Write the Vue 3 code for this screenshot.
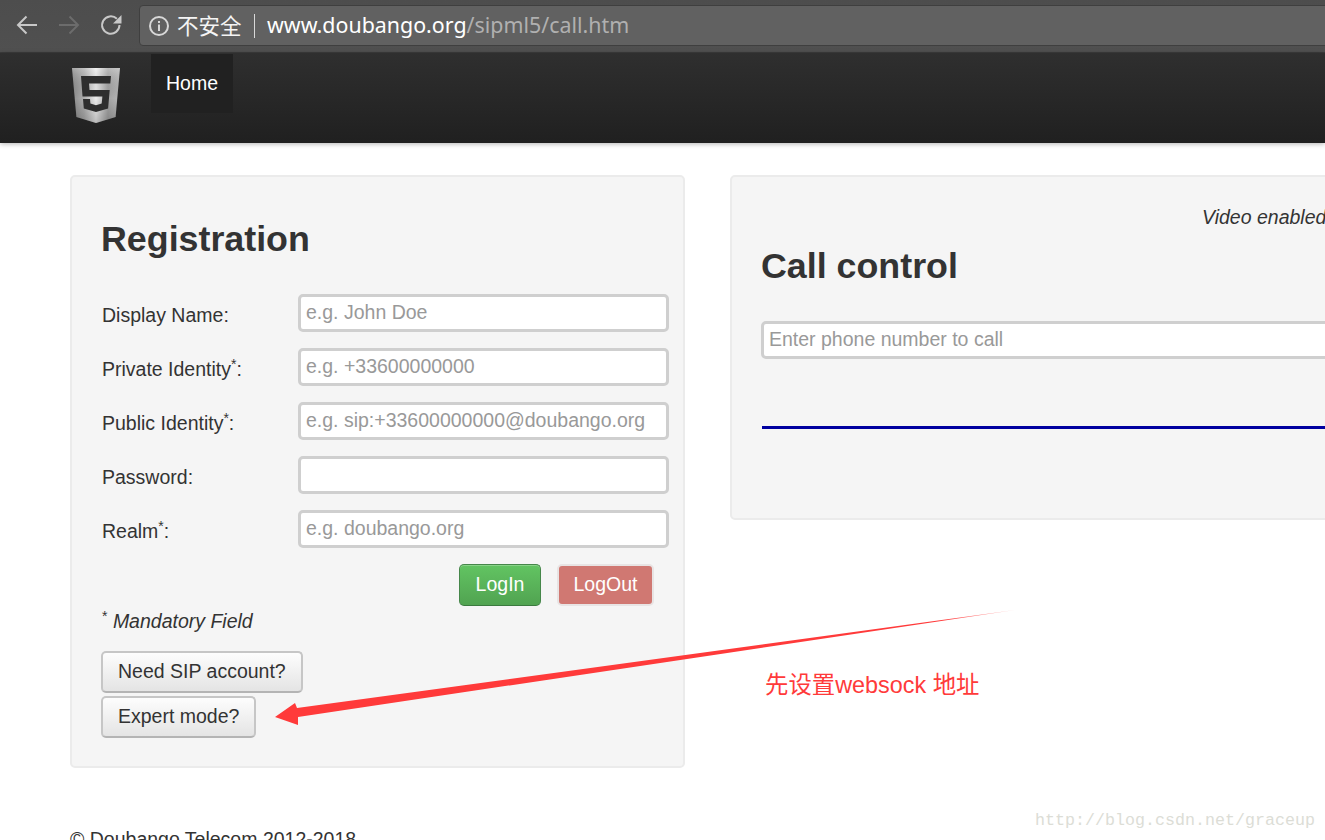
<script setup>
const fields = [
  { label: 'Display Name', star: false, placeholder: 'e.g. John Doe' },
  { label: 'Private Identity', star: true, placeholder: 'e.g. +33600000000' },
  { label: 'Public Identity', star: true, placeholder: 'e.g. sip:+33600000000@doubango.org' },
  { label: 'Password', star: false, placeholder: '' },
  { label: 'Realm', star: true, placeholder: 'e.g. doubango.org' },
]
</script>

<template>
  <div class="screen">
    <header class="toolbar">
      <svg class="nav-icon" width="24" height="24" viewBox="0 0 24 24" fill="none" stroke="#c8c8c8" stroke-width="2">
        <path d="M22 12H3M11.5 3.5 3 12l8.5 8.5" />
      </svg>
      <svg class="nav-icon" width="24" height="24" viewBox="0 0 24 24" fill="none" stroke="#6c6c6c" stroke-width="2">
        <path d="M2 12h19M12.5 3.5 21 12l-8.5 8.5" />
      </svg>
      <svg class="nav-icon" width="24" height="24" viewBox="0 0 24 24" fill="none">
        <path d="M20.5 12a8.7 8.7 0 1 1-2.6-6.2" stroke="#c8c8c8" stroke-width="2" />
        <path d="M22.5 2v8.5H14z" fill="#c8c8c8" />
      </svg>
      <div class="address">
        <svg width="22" height="22" viewBox="0 0 22 22" fill="none">
          <circle cx="11" cy="11" r="9" stroke="#d8d8d8" stroke-width="2" />
          <rect x="10" y="9.5" width="2" height="6.5" fill="#d8d8d8" />
          <rect x="10" y="6" width="2" height="2" fill="#d8d8d8" />
        </svg>
        <span class="insecure">不安全</span>
        <span class="divider"></span>
        <span class="url"><span class="host">www.doubango.org</span><span class="path">/sipml5/call.htm</span></span>
      </div>
    </header>

    <nav class="navbar">
      <svg class="logo" width="50" height="57" viewBox="0 0 50 57">
        <defs>
          <linearGradient id="silver" x1="0" x2="1" y1="0" y2="0">
            <stop offset="0" stop-color="#8a8a8a" />
            <stop offset="0.25" stop-color="#adadad" />
            <stop offset="0.5" stop-color="#ececec" />
            <stop offset="0.75" stop-color="#a4a4a4" />
            <stop offset="1" stop-color="#b8b8b8" />
          </linearGradient>
          <linearGradient id="shade" x1="0" x2="0" y1="0" y2="1">
            <stop offset="0" stop-color="#fff" stop-opacity="0.25" />
            <stop offset="0.55" stop-color="#000" stop-opacity="0" />
            <stop offset="1" stop-color="#000" stop-opacity="0.2" />
          </linearGradient>
        </defs>
        <path d="M1 1h48l-4.4 49L25 56 5.4 50z" fill="url(#silver)" />
        <path d="M1 1h48l-4.4 49L25 56 5.4 50z" fill="url(#shade)" />
        <path d="M10 9h30l-.7 7.5H18l.5 6.5h20.2l-1.6 18.5L25 45l-12.2-3.5-.8-9.5h7l.4 4.6 5.6 1.6 5.7-1.6.7-7H11.5z" fill="#2e2e2e" />
      </svg>
      <a class="home">Home</a>
    </nav>

    <main class="content">
      <section class="panel reg">
        <h2>Registration</h2>
        <div v-for="f in fields" :key="f.label" class="row">
          <label>{{ f.label }}<sup v-if="f.star">*</sup>:</label>
          <input :placeholder="f.placeholder" />
        </div>
        <div class="actions">
          <button class="btn-login">LogIn</button>
          <button class="btn-logout">LogOut</button>
        </div>
        <p class="mandatory"><sup>*</sup> <em>Mandatory Field</em></p>
        <div class="extra">
          <button class="btn-plain">Need SIP account?</button>
          <button class="btn-plain">Expert mode?</button>
        </div>
      </section>

      <section class="panel call">
        <p class="video">Video enabled</p>
        <h2>Call control</h2>
        <input class="phone" placeholder="Enter phone number to call" />
        <div class="rule"></div>
      </section>
    </main>

    <footer class="copyright">© Doubango Telecom 2012-2018</footer>

    <svg class="arrow" width="1325" height="840" viewBox="0 0 1325 840">
      <defs>
        <linearGradient id="fade" gradientUnits="userSpaceOnUse" x1="275" y1="717" x2="1015" y2="610">
          <stop offset="0" stop-color="#ff3a3a" />
          <stop offset="0.9" stop-color="#ff3a3a" />
          <stop offset="1" stop-color="#ff3a3a" stop-opacity="0.4" />
        </linearGradient>
      </defs>
      <polygon points="275,717 295,703 297,708 1015,610 298,717 298,725" fill="url(#fade)" />
    </svg>
    <div class="note">先设置websock 地址</div>
    <div class="watermark">http://blog.csdn.net/graceup</div>
  </div>
</template>

<style>
html, body { margin: 0; overflow: hidden; background: #fff; }
</style>

<style scoped>
.screen {
  position: relative;
  width: 1325px;
  height: 840px;
  overflow: hidden;
  background: #fff;
  color: #333;
  font: 19.5px/28px "Liberation Sans", Arial, sans-serif;
}
.toolbar {
  height: 53px;
  box-sizing: border-box;
  display: flex;
  align-items: flex-start;
  padding: 5px 0 0 15px;
  background: linear-gradient(#4d4d4d, #505050);
  border-bottom: 1px solid #3c3c3c;
}
.nav-icon { margin: 8px 18px 0 0; flex: none; }
.nav-icon:nth-child(3) { margin-right: 16px; }
.address {
  flex: 1;
  height: 41px;
  box-sizing: border-box;
  display: flex;
  align-items: center;
  margin-right: -10px;
  padding-left: 8px;
  background: #616161;
  border: 1px solid #3f3f3f;
  border-radius: 4px;
}
.insecure {
  margin-left: 7px;
  padding-bottom: 2px;
  width: 77px;
  color: #f4f4f4;
  font: 21.5px "Noto Sans CJK SC", sans-serif;
}
.divider { width: 1px; height: 24px; background: #d8d8d8; margin-right: 12px; }
.url {
  padding-bottom: 2px;
  font: 21.4px "Noto Sans", "Noto Sans CJK SC", sans-serif;
}
.host { color: #fff; }
.path { color: #b0b0b0; }

.navbar {
  height: 90px;
  box-sizing: border-box;
  display: flex;
  align-items: flex-start;
  padding-left: 71px;
  background: linear-gradient(#2f2f2f, #202020);
  box-shadow: 0 1px 5px rgba(0, 0, 0, 0.3);
  position: relative;
}
.logo { margin: 14px 0 0; flex: none; }
.home {
  margin: 1px 0 0 30px;
  width: 82px;
  height: 59px;
  background: #212121;
  color: #fff;
  text-align: center;
  line-height: 59px;
}

.content {
  display: flex;
  align-items: flex-start;
  gap: 45px;
  padding: 32px 0 0 70px;
}
.panel {
  flex: none;
  box-sizing: border-box;
  background: #f5f5f5;
  border: 2px solid #ebebeb;
  border-radius: 5px;
}
h2 {
  margin: 0;
  font-size: 35.8px;
  line-height: 44px;
  font-weight: bold;
  color: #333;
}
.reg { width: 615px; height: 593px; padding: 40px 14px 0 29px; }
.reg h2 { margin-bottom: 33px; }
.row { display: flex; margin-bottom: 16px; }
.row label { width: 197px; box-sizing: border-box; padding: 7px 0 0 1px; line-height: 28px; }
sup { font-size: 14px; line-height: 0; }
input {
  display: block;
  width: 371px;
  height: 38px;
  box-sizing: border-box;
  padding: 0 5px 2px;
  margin: 0;
  background: #fff;
  border: 3px solid #cfcfcf;
  border-radius: 5px;
  font: 19.5px "Liberation Sans", Arial, sans-serif;
  color: #333;
  outline: none;
}
input::placeholder { color: #999; opacity: 1; }
.actions { display: flex; justify-content: flex-end; gap: 16px; padding-right: 15px; }
button {
  display: block;
  box-sizing: border-box;
  height: 42px;
  padding: 0;
  font: 19.5px "Liberation Sans", Arial, sans-serif;
  border-radius: 5px;
}
.btn-login {
  width: 82px;
  padding-bottom: 2px;
  color: #fff;
  background: linear-gradient(#62c462, #51a351);
  border: 1px solid #46874a;
  border-bottom-color: #3b7a3f;
  box-shadow: inset 0 1px 0 rgba(255, 255, 255, 0.25);
}
.btn-logout {
  width: 97px;
  padding-bottom: 2px;
  color: #fff;
  background: #d07872;
  border: 2px solid #e8e4e4;
}
.mandatory { margin: 1px 0 0; height: 44px; padding-left: 1px; line-height: 28px; color: #333; }
.extra { display: flex; flex-direction: column; align-items: flex-start; gap: 3px; }
.btn-plain {
  padding: 0 15px 2px;
  color: #333;
  background: linear-gradient(#fdfdfd, #e4e4e4);
  border: 2px solid #c6c6c6;
  border-bottom-color: #b4b4b4;
}
.call { width: 760px; height: 345px; padding: 26px 0 0 29px; }
.video { margin: 0 0 0 441px; white-space: nowrap; font-style: italic; line-height: 28px; }
.call h2 { margin-top: 13px; margin-bottom: 33px; }
.phone { width: 700px; }
.rule { width: 700px; height: 3px; margin: 67px 0 0 1px; background: #0000a0; }

.copyright { padding: 57px 0 0 70px; white-space: nowrap; line-height: 28px; }

.arrow { position: absolute; left: 0; top: 0; pointer-events: none; }
.note {
  position: absolute;
  left: 765px;
  top: 668px;
  color: #ff3a3a;
  white-space: nowrap;
  font: 23.4px/34px "Liberation Sans", "Noto Sans CJK SC", sans-serif;
}
.watermark {
  position: absolute;
  left: 1035px;
  top: 809px;
  color: #dcddd6;
  white-space: nowrap;
  font: 16.67px/24px "Liberation Mono", monospace;
}
</style>
